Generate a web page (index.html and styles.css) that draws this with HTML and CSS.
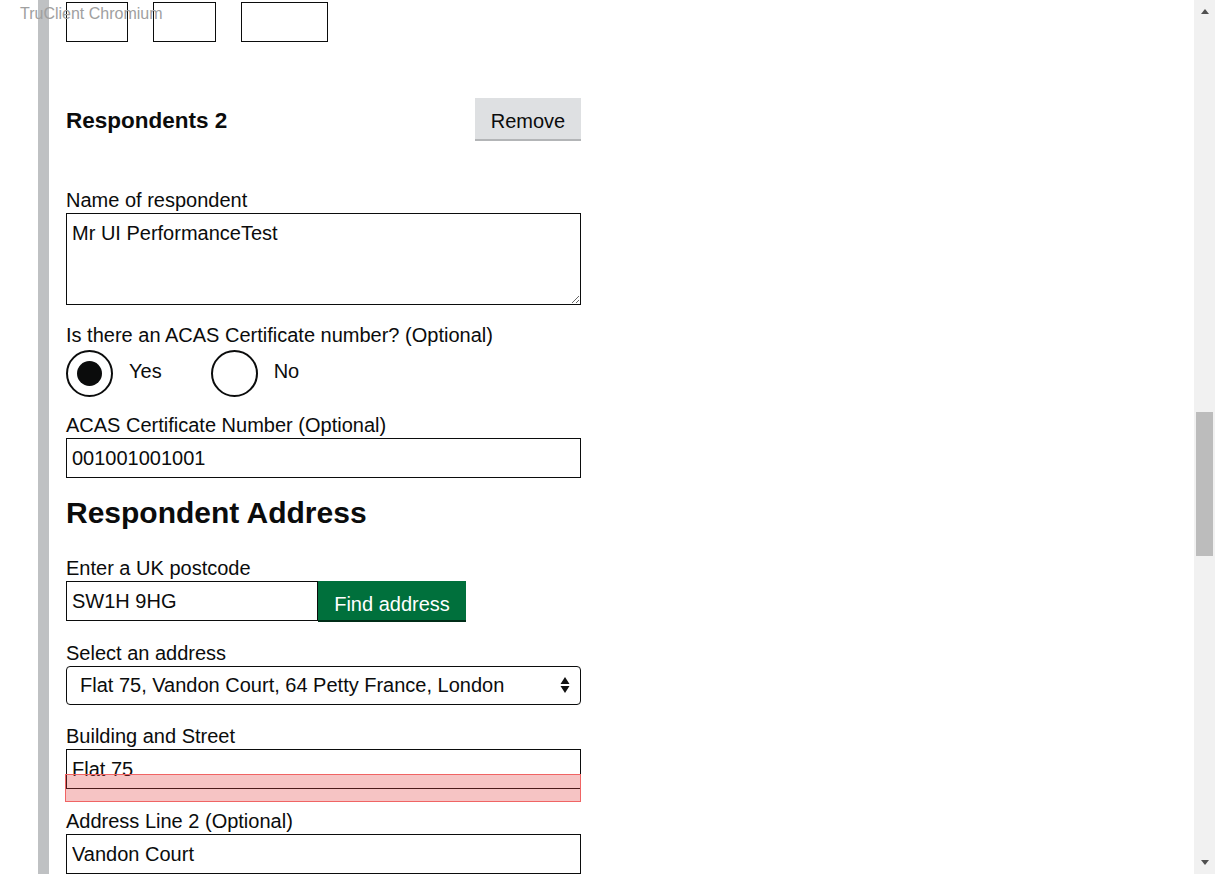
FILE: index.html
```html
<!DOCTYPE html>
<html>
<head>
<meta charset="utf-8">
<link rel="stylesheet" href="styles.css">
</head>
<body>
<div class="window">
  <div class="page">
    <div class="section">
      <div class="date-row">
        <div class="date-box day"></div>
        <div class="date-box month"></div>
        <div class="date-box year"></div>
      </div>

      <div class="resp-header">
        <h2 class="resp-title">Respondents 2</h2>
        <button class="btn-secondary">Remove</button>
      </div>

      <div class="group group-name">
        <label class="label">Name of respondent</label>
        <textarea class="textarea">Mr UI PerformanceTest</textarea>
      </div>

      <div class="group group-acas-q">
        <div class="label">Is there an ACAS Certificate number? (Optional)</div>
        <div class="radios">
          <label class="radio"><span class="radio-circle checked"></span><span class="radio-text">Yes</span></label>
          <label class="radio"><span class="radio-circle"></span><span class="radio-text">No</span></label>
        </div>
      </div>

      <div class="group group-acas-num">
        <label class="label">ACAS Certificate Number (Optional)</label>
        <input class="input" type="text" value="001001001001">
      </div>

      <h2 class="heading-address">Respondent Address</h2>

      <div class="group group-postcode">
        <label class="label">Enter a UK postcode</label>
        <div class="postcode-row">
          <input class="input postcode" type="text" value="SW1H 9HG">
          <button class="btn-primary">Find address</button>
        </div>
      </div>

      <div class="group">
        <label class="label">Select an address</label>
        <div class="select-wrap">
          <div class="select">Flat 75, Vandon Court, 64 Petty France, London</div>
          <span class="select-arrow"><svg width="10" height="20" viewBox="0 0 10 20"><path d="M5 2 L9.5 9 H0.5 Z M5 18 L9.5 11 H0.5 Z" fill="#111"/></svg></span>
        </div>
      </div>

      <div class="group">
        <label class="label">Building and Street</label>
        <div class="input-wrap">
          <input class="input" type="text" value="Flat 75">
          <div class="highlight"></div>
        </div>
      </div>

      <div class="group group-addr2">
        <label class="label">Address Line 2 (Optional)</label>
        <input class="input" type="text" value="Vandon Court">
      </div>
    </div>
  </div>
  <div class="scrollbar">
    <div class="sb-btn"><span class="tri-up"></span></div>
    <div class="sb-track"><div class="sb-thumb"></div></div>
    <div class="sb-btn"><span class="tri-down"></span></div>
  </div>
</div>
<div class="watermark">TruClient Chromium</div>
</body>
</html>
```

FILE: styles.css
```css
* { box-sizing: border-box; }
html, body {
  margin: 0;
  padding: 0;
  height: 874px;
  overflow: hidden;
  background: #fff;
}
body {
  font-family: "Liberation Sans", Arial, sans-serif;
  color: #0b0c0c;
  font-size: 20px;
}
.window {
  display: flex;
  height: 874px;
}
.page {
  flex: 1;
  padding-left: 38px;
}
.section {
  border-left: 11px solid #bfc1c3;
  padding-left: 17px;
  padding-top: 2px;
  width: 543px;
  height: 874px;
}
.date-row {
  display: flex;
  gap: 25px;
}
.date-box {
  height: 40px;
  border: 1px solid #0b0c0c;
}
.day { width: 62px; }
.month { width: 63px; }
.year { width: 87px; }

.resp-header {
  margin-top: 56px;
  display: flex;
  justify-content: space-between;
  align-items: center;
  width: 515px;
}
.resp-title {
  margin: 0;
  font-size: 22.5px;
  font-weight: bold;
  line-height: 30px;
  padding-top: 2px;
}
.btn-secondary {
  font-family: inherit;
  font-size: 20px;
  color: #0b0c0c;
  background: #dee0e2;
  border: 0;
  border-bottom: 2px solid #b3b5b7;
  width: 106px;
  height: 43px;
  padding: 6px 0 0;
  margin: 0;
}

.group { margin-top: 19px; width: 515px; }
.group-name { margin-top: 47px; }
.group-acas-q { margin-top: 18px; }
.group-acas-num { margin-top: 16px; }
.group-postcode { margin-top: 25px; }
.group-addr2 { margin-top: 20px; }

.label {
  display: block;
  line-height: 25px;
  margin-bottom: 0;
}
.textarea {
  display: block;
  width: 515px;
  height: 92px;
  border: 1px solid #0b0c0c;
  font-family: inherit;
  font-size: 20px;
  line-height: 25px;
  color: #0b0c0c;
  padding: 7px 5px 6px;
  margin: 0;
  resize: vertical;
}
.input {
  display: block;
  width: 515px;
  height: 40px;
  border: 1px solid #0b0c0c;
  font-family: inherit;
  font-size: 20px;
  color: #0b0c0c;
  padding: 0 5px;
  margin: 0;
  outline: none;
}
.radios {
  display: flex;
  gap: 49px;
  margin-top: 1px;
}
.radio {
  display: flex;
  align-items: center;
  gap: 16px;
  height: 48px;
}
.radio-circle {
  width: 47px;
  height: 47px;
  border: 2px solid #0b0c0c;
  border-radius: 50%;
  display: flex;
  align-items: center;
  justify-content: center;
}
.radio-circle.checked::after {
  content: "";
  width: 25px;
  height: 25px;
  border-radius: 50%;
  background: #0b0c0c;
}
.radio-text { line-height: 25px; padding-bottom: 4px; }

.heading-address {
  margin: 17px 0 0;
  font-size: 30px;
  line-height: 36px;
  font-weight: bold;
}

.postcode-row {
  display: flex;
}
.input.postcode { width: 252px; }
.btn-primary {
  font-family: inherit;
  font-size: 20px;
  color: #fff;
  background: #00703c;
  border: 0;
  border-bottom: 2px solid #002d18;
  width: 148px;
  height: 41px;
  margin: 0;
  padding: 7px 0 0;
}

.select-wrap {
  position: relative;
}
.select {
  height: 39px;
  border: 1px solid #0b0c0c;
  border-radius: 4px;
  padding: 0 13px;
  line-height: 37px;
}
.select-arrow {
  position: absolute;
  right: 11px;
  top: 9px;
  display: flex;
}

.input-wrap {
  position: relative;
}
.highlight {
  position: absolute;
  left: -1px;
  top: 25px;
  width: 516px;
  height: 28px;
  background: rgba(225, 60, 60, 0.3);
  border: 1px solid #f06464;
}

.scrollbar {
  width: 21px;
  background: #f1f1f1;
  display: flex;
  flex-direction: column;
}
.sb-btn {
  height: 17px;
  display: flex;
  align-items: center;
  justify-content: center;
  padding-left: 1px;
}
.tri-up {
  width: 0; height: 0;
  border-left: 4.5px solid transparent;
  border-right: 4.5px solid transparent;
  border-bottom: 5px solid #505050;
  margin-top: 6px;
}
.tri-down {
  width: 0; height: 0;
  border-left: 4.5px solid transparent;
  border-right: 4.5px solid transparent;
  border-top: 5px solid #505050;
  margin-bottom: 6px;
}
.sb-track {
  flex: 1;
  padding: 0 2px;
}
.sb-thumb {
  margin-top: 395px;
  height: 144px;
  background: #bcbcbc;
}

.watermark {
  position: absolute;
  left: 20px;
  top: 5px;
  font-size: 16px;
  color: #a0a0a0;
  line-height: 18px;
}
```
